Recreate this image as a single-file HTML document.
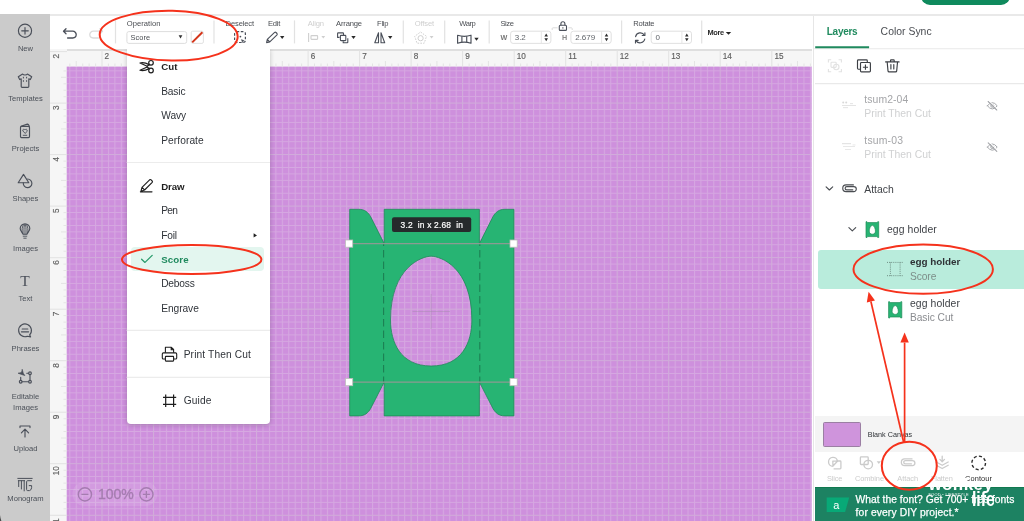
<!DOCTYPE html>
<html><head><meta charset="utf-8"><title>Design Space</title>
<style>
*{box-sizing:border-box;margin:0;padding:0}
html,body{width:1024px;height:521px;overflow:hidden;background:#fff;font-family:"Liberation Sans",sans-serif;color:#3a3d42}
.a{position:absolute;white-space:nowrap;line-height:1}
svg{position:absolute;left:0;top:0;overflow:visible;will-change:transform}
#side{left:0;top:14px;width:50px;height:507px;background:#cbcbcb}
.sl{left:0;width:51px;text-align:center;font-size:7.6px;color:#4b5058}
</style></head><body>
<div class="a" style="left:920.5px;top:-14px;width:89px;height:19.4px;border-radius:9px;background:#0f8a5d"></div>
<div class="a" style="left:0;top:14px;width:1024px;height:1.5px;background:#e9e9e9"></div>
<div id="side" class="a"></div>
<svg width="1024" height="521"><path d="M0 515Q.4 518.5 1.4 521H0Z" fill="#4a4a4a"/></svg>
<div class="a sl" style="top:44.7px">New</div>
<div class="a sl" style="top:94.7px">Templates</div>
<div class="a sl" style="top:144.7px">Projects</div>
<div class="a sl" style="top:194.7px">Shapes</div>
<div class="a sl" style="top:244.7px">Images</div>
<div class="a sl" style="top:294.7px">Text</div>
<div class="a sl" style="top:344.7px">Phrases</div>
<div class="a sl" style="top:392.7px">Editable</div>
<div class="a sl" style="top:404.0px">Images</div>
<div class="a sl" style="top:445.2px">Upload</div>
<div class="a sl" style="top:495.2px">Monogram</div>
<div class="a" style="left:50px;top:15.5px;width:763.5px;height:34px;background:#fff"></div>
<div class="a" style="left:50px;top:49px;width:762px;height:17.6px;background:#f6f6f6;border-top:2px solid #dfdfdf"></div>
<div class="a" style="left:50px;top:49px;width:16.7px;height:472px;background:#f6f6f6"></div>
<svg width="1024" height="521" viewBox="0 0 1024 521">
<defs><pattern id="g" x="101.50" y="102.60" width="6.44" height="6.44" patternUnits="userSpaceOnUse"><path d="M0.5 0V6.44M0 0.5H6.44" stroke="#ececec" stroke-opacity=".26" stroke-width="1" fill="none"/></pattern>
<clipPath id="cv"><rect x="66.7" y="66.6" width="745" height="455"/></clipPath></defs>
<rect x="66.7" y="66.6" width="745" height="455" fill="#ce90dd"/>
<rect x="66.7" y="66.6" width="745" height="455" fill="url(#g)"/>
<path d="M102.0 66.6V521M153.5 66.6V521M205.0 66.6V521M256.6 66.6V521M308.1 66.6V521M359.6 66.6V521M411.1 66.6V521M462.6 66.6V521M514.2 66.6V521M565.7 66.6V521M617.2 66.6V521M668.7 66.6V521M720.2 66.6V521M771.8 66.6V521M67 103.1H812M67 154.6H812M67 206.1H812M67 257.7H812M67 309.2H812M67 360.7H812M67 412.2H812M67 463.7H812M67 515.3H812" stroke="#c9b4cf" stroke-opacity=".35" stroke-width="1" fill="none"/>
<path d="M69.8 63.5V66.6M76.2 61V66.6M82.7 63.5V66.6M89.1 63.5V66.6M95.6 63.5V66.6M108.4 63.5V66.6M114.9 63.5V66.6M121.3 63.5V66.6M127.8 61V66.6M134.2 63.5V66.6M140.6 63.5V66.6M147.1 63.5V66.6M160.0 63.5V66.6M166.4 63.5V66.6M172.8 63.5V66.6M179.3 61V66.6M185.7 63.5V66.6M192.2 63.5V66.6M198.6 63.5V66.6M211.5 63.5V66.6M217.9 63.5V66.6M224.4 63.5V66.6M230.8 61V66.6M237.2 63.5V66.6M243.7 63.5V66.6M250.1 63.5V66.6M263.0 63.5V66.6M269.4 63.5V66.6M275.9 63.5V66.6M282.3 61V66.6M288.8 63.5V66.6M295.2 63.5V66.6M301.6 63.5V66.6M314.5 63.5V66.6M321.0 63.5V66.6M327.4 63.5V66.6M333.8 61V66.6M340.3 63.5V66.6M346.7 63.5V66.6M353.2 63.5V66.6M366.0 63.5V66.6M372.5 63.5V66.6M378.9 63.5V66.6M385.4 61V66.6M391.8 63.5V66.6M398.2 63.5V66.6M404.7 63.5V66.6M417.6 63.5V66.6M424.0 63.5V66.6M430.4 63.5V66.6M436.9 61V66.6M443.3 63.5V66.6M449.8 63.5V66.6M456.2 63.5V66.6M469.1 63.5V66.6M475.5 63.5V66.6M482.0 63.5V66.6M488.4 61V66.6M494.8 63.5V66.6M501.3 63.5V66.6M507.7 63.5V66.6M520.6 63.5V66.6M527.0 63.5V66.6M533.5 63.5V66.6M539.9 61V66.6M546.4 63.5V66.6M552.8 63.5V66.6M559.2 63.5V66.6M572.1 63.5V66.6M578.6 63.5V66.6M585.0 63.5V66.6M591.4 61V66.6M597.9 63.5V66.6M604.3 63.5V66.6M610.8 63.5V66.6M623.6 63.5V66.6M630.1 63.5V66.6M636.5 63.5V66.6M643.0 61V66.6M649.4 63.5V66.6M655.8 63.5V66.6M662.3 63.5V66.6M675.2 63.5V66.6M681.6 63.5V66.6M688.0 63.5V66.6M694.5 61V66.6M700.9 63.5V66.6M707.4 63.5V66.6M713.8 63.5V66.6M726.7 63.5V66.6M733.1 63.5V66.6M739.6 63.5V66.6M746.0 61V66.6M752.4 63.5V66.6M758.9 63.5V66.6M765.3 63.5V66.6M778.2 63.5V66.6M784.6 63.5V66.6M791.1 63.5V66.6M797.5 61V66.6M804.0 63.5V66.6M810.4 63.5V66.6M63.5 70.9H67M61 77.3H67M63.5 83.8H67M63.5 90.2H67M63.5 96.7H67M63.5 109.5H67M63.5 116.0H67M63.5 122.4H67M61 128.9H67M63.5 135.3H67M63.5 141.7H67M63.5 148.2H67M63.5 161.1H67M63.5 167.5H67M63.5 173.9H67M61 180.4H67M63.5 186.8H67M63.5 193.3H67M63.5 199.7H67M63.5 212.6H67M63.5 219.0H67M63.5 225.5H67M61 231.9H67M63.5 238.3H67M63.5 244.8H67M63.5 251.2H67M63.5 264.1H67M63.5 270.5H67M63.5 277.0H67M61 283.4H67M63.5 289.9H67M63.5 296.3H67M63.5 302.7H67M63.5 315.6H67M63.5 322.1H67M63.5 328.5H67M61 334.9H67M63.5 341.4H67M63.5 347.8H67M63.5 354.3H67M63.5 367.1H67M63.5 373.6H67M63.5 380.0H67M61 386.5H67M63.5 392.9H67M63.5 399.3H67M63.5 405.8H67M63.5 418.7H67M63.5 425.1H67M63.5 431.5H67M61 438.0H67M63.5 444.4H67M63.5 450.9H67M63.5 457.3H67M63.5 470.2H67M63.5 476.6H67M63.5 483.1H67M61 489.5H67M63.5 495.9H67M63.5 502.4H67M63.5 508.8H67" stroke="#e4e4e4" stroke-width="1" fill="none"/>
<path d="M102.0 50V66.6M153.5 50V66.6M205.0 50V66.6M256.6 50V66.6M308.1 50V66.6M359.6 50V66.6M411.1 50V66.6M462.6 50V66.6M514.2 50V66.6M565.7 50V66.6M617.2 50V66.6M668.7 50V66.6M720.2 50V66.6M771.8 50V66.6M50 51.6H67M50 103.1H67M50 154.6H67M50 206.1H67M50 257.7H67M50 309.2H67M50 360.7H67M50 412.2H67M50 463.7H67M50 515.3H67" stroke="#e2e2e2" stroke-width="1" fill="none"/>
<path d="M349.7 209.3H358.7C364.7 209.3 368.2 212.3 370.7 216.8L384.2 243.6V209.3H479.4V243.6L492.9 216.8C495.4 212.3 498.9 209.3 504.9 209.3H513.9V415.9H504.9C498.9 415.9 495.4 412.9 492.9 408.4L479.4 382.1V415.9H384.2V382.1L370.7 408.4C368.2 412.9 364.7 415.9 358.7 415.9H349.7ZM431.2 256.2C440.2 256.2 471.85 267 471.85 320C471.85 342 462.2 366 431.2 366C400.2 366 390.55 342 390.55 320C390.55 267 422.2 256.2 431.2 256.2Z" fill="#27b473" fill-rule="evenodd" stroke="#1f8a58" stroke-width=".8"/>
<path d="M431.2 294V329M412.5 311.5H450" stroke="#9a8aa0" stroke-opacity=".45" stroke-width=".8"/>
<path d="M383.59999999999997 243.6V382.1M479.79999999999995 243.6V382.1" stroke="#1d7f53" stroke-width="1.1" stroke-dasharray="7.3 4.2" stroke-dashoffset="5" fill="none"/>
<path d="M349 243.6H513.6M349 382.1H513.6" stroke="#8c9a92" stroke-width="1.1" fill="none"/>
<rect x="345.5" y="240.0" width="7.2" height="7.2" fill="#fff" stroke="#bdbdbd" stroke-width=".8"/>
<rect x="345.5" y="378.5" width="7.2" height="7.2" fill="#fff" stroke="#bdbdbd" stroke-width=".8"/>
<rect x="510.0" y="240.0" width="7.2" height="7.2" fill="#fff" stroke="#bdbdbd" stroke-width=".8"/>
<rect x="510.0" y="378.5" width="7.2" height="7.2" fill="#fff" stroke="#bdbdbd" stroke-width=".8"/>
<rect x="392" y="217.3" width="79.2" height="14.6" rx="2" fill="#262a2c"/>
<text x="400.6" y="227.8" font-family="Liberation Sans, sans-serif" font-size="8.4" fill="#fff" stroke="#fff" stroke-width=".2" xml:space="preserve" textLength="62.3" lengthAdjust="spacing">3.2  in x 2.68  in</text>
<rect x="72.5" y="482" width="85" height="24" rx="12" fill="#fff" fill-opacity=".1"/>
<g stroke="#a57cb0" stroke-width="1.4" fill="none"><circle cx="84.9" cy="494.4" r="6.6"/><circle cx="146.4" cy="494.4" r="6.6"/><path d="M81.4 494.4H88.4M142.9 494.4H149.9M146.4 490.9V497.9"/></g>
<text x="98" y="499.4" font-family="Liberation Sans, sans-serif" font-size="14" fill="#a57cb0" stroke="#a57cb0" stroke-width=".35">100%</text>
<text x="104.6" y="59.4" font-family="Liberation Sans, sans-serif" font-size="8.2" fill="#5e5e5e" stroke="#5e5e5e" stroke-width=".15">2</text>
<text x="156.1" y="59.4" font-family="Liberation Sans, sans-serif" font-size="8.2" fill="#5e5e5e" stroke="#5e5e5e" stroke-width=".15">3</text>
<text x="207.6" y="59.4" font-family="Liberation Sans, sans-serif" font-size="8.2" fill="#5e5e5e" stroke="#5e5e5e" stroke-width=".15">4</text>
<text x="259.2" y="59.4" font-family="Liberation Sans, sans-serif" font-size="8.2" fill="#5e5e5e" stroke="#5e5e5e" stroke-width=".15">5</text>
<text x="310.7" y="59.4" font-family="Liberation Sans, sans-serif" font-size="8.2" fill="#5e5e5e" stroke="#5e5e5e" stroke-width=".15">6</text>
<text x="362.2" y="59.4" font-family="Liberation Sans, sans-serif" font-size="8.2" fill="#5e5e5e" stroke="#5e5e5e" stroke-width=".15">7</text>
<text x="413.7" y="59.4" font-family="Liberation Sans, sans-serif" font-size="8.2" fill="#5e5e5e" stroke="#5e5e5e" stroke-width=".15">8</text>
<text x="465.2" y="59.4" font-family="Liberation Sans, sans-serif" font-size="8.2" fill="#5e5e5e" stroke="#5e5e5e" stroke-width=".15">9</text>
<text x="516.8" y="59.4" font-family="Liberation Sans, sans-serif" font-size="8.2" fill="#5e5e5e" stroke="#5e5e5e" stroke-width=".15">10</text>
<text x="568.3" y="59.4" font-family="Liberation Sans, sans-serif" font-size="8.2" fill="#5e5e5e" stroke="#5e5e5e" stroke-width=".15">11</text>
<text x="619.8" y="59.4" font-family="Liberation Sans, sans-serif" font-size="8.2" fill="#5e5e5e" stroke="#5e5e5e" stroke-width=".15">12</text>
<text x="671.3" y="59.4" font-family="Liberation Sans, sans-serif" font-size="8.2" fill="#5e5e5e" stroke="#5e5e5e" stroke-width=".15">13</text>
<text x="722.8" y="59.4" font-family="Liberation Sans, sans-serif" font-size="8.2" fill="#5e5e5e" stroke="#5e5e5e" stroke-width=".15">14</text>
<text x="774.4" y="59.4" font-family="Liberation Sans, sans-serif" font-size="8.2" fill="#5e5e5e" stroke="#5e5e5e" stroke-width=".15">15</text>
<text transform="translate(58.8 58.6) rotate(-90)" font-family="Liberation Sans, sans-serif" font-size="8.2" fill="#5e5e5e" stroke="#5e5e5e" stroke-width=".15">2</text>
<text transform="translate(58.8 110.1) rotate(-90)" font-family="Liberation Sans, sans-serif" font-size="8.2" fill="#5e5e5e" stroke="#5e5e5e" stroke-width=".15">3</text>
<text transform="translate(58.8 161.6) rotate(-90)" font-family="Liberation Sans, sans-serif" font-size="8.2" fill="#5e5e5e" stroke="#5e5e5e" stroke-width=".15">4</text>
<text transform="translate(58.8 213.1) rotate(-90)" font-family="Liberation Sans, sans-serif" font-size="8.2" fill="#5e5e5e" stroke="#5e5e5e" stroke-width=".15">5</text>
<text transform="translate(58.8 264.7) rotate(-90)" font-family="Liberation Sans, sans-serif" font-size="8.2" fill="#5e5e5e" stroke="#5e5e5e" stroke-width=".15">6</text>
<text transform="translate(58.8 316.2) rotate(-90)" font-family="Liberation Sans, sans-serif" font-size="8.2" fill="#5e5e5e" stroke="#5e5e5e" stroke-width=".15">7</text>
<text transform="translate(58.8 367.7) rotate(-90)" font-family="Liberation Sans, sans-serif" font-size="8.2" fill="#5e5e5e" stroke="#5e5e5e" stroke-width=".15">8</text>
<text transform="translate(58.8 419.2) rotate(-90)" font-family="Liberation Sans, sans-serif" font-size="8.2" fill="#5e5e5e" stroke="#5e5e5e" stroke-width=".15">9</text>
<text transform="translate(58.8 475.3) rotate(-90)" font-family="Liberation Sans, sans-serif" font-size="8.2" fill="#5e5e5e" stroke="#5e5e5e" stroke-width=".15">10</text>
<text transform="translate(58.8 526.9) rotate(-90)" font-family="Liberation Sans, sans-serif" font-size="8.2" fill="#5e5e5e" stroke="#5e5e5e" stroke-width=".15">11</text>
</svg>
<svg width="1024" height="521" viewBox="0 0 1024 521">
<g fill="none" stroke="#4a4f59" stroke-width="1.15" stroke-linecap="round" stroke-linejoin="round">
<circle cx="25" cy="30.8" r="6.6"/><path d="M21.7 30.8H28.3M25 27.5V34.1"/>
<path d="M22.6 74.1C23.6 75.3 26.4 75.3 27.4 74.1L31.7 76.8L30.3 79.6L28.8 78.8V86.4Q28.8 87.3 27.9 87.3H22.1Q21.2 87.3 21.2 86.4V78.8L19.7 79.6L18.3 76.8Z"/>
<path d="M23.4 77.2V78M26.6 77.2V78M23.4 80.6V81.4M26.6 80.6V81.4" stroke-width="1"/>
<rect x="20.5" y="126.4" width="9" height="11.2" rx="1"/><path d="M21 126.2L27.3 124.1Q28 124 28.4 124.6L29.3 126.3"/>
<path d="M25 133.2L22.9 131Q22.3 129.6 23.6 129.3Q24.5 129.2 25 130Q25.5 129.2 26.4 129.3Q27.7 129.6 27.1 131Z" stroke-width=".9"/><path d="M23.2 135.3H26.8" stroke-width=".9"/>
<path d="M23.5 174.4L28.8 182.7H18.2Z"/><path d="M27.6 179A4.3 4.3 0 1 1 23.3 182.9"/>
<path d="M22.9 234.2C22.6 232.2 20.2 231.2 20.2 228.6A4.8 4.8 0 0 1 29.8 228.6C29.8 231.2 27.4 232.2 27.1 234.2Z"/><path d="M23.2 236.2H26.8M23.8 238.2H26.2M24 234V229.5C24 226.5 24.3 225 25 224.3C25.7 225 26 226.5 26 229.5V234M22.3 233C21.8 230 22 226.5 23.5 224.6M27.7 233C28.2 230 28 226.5 26.5 224.6" stroke-width=".9"/>
<path d="M29.6 334.8A6.4 6.4 0 1 0 27.3 336.3L30.6 336.9Z"/><path d="M22.2 329H27.8M21.4 331.8H28.6"/>
<circle cx="30" cy="373.2" r="1.35"/><circle cx="30" cy="381.7" r="1.35"/><circle cx="20.7" cy="381.7" r="1.35"/><path d="M28.6 373.2H26.8M30 374.6V380.3M28.6 381.7H22.1M20.7 380.3V377.4"/>
<path d="M22.3 369.6L23.3 373.3L24.9 375.6L21.4 374.4L18 373.2L21.3 372.6Z" fill="#4a4f59" stroke-width=".6"/>
<path d="M20 427.6V426H30V427.6M25 437V429.4M21.4 432.8L25 429.2L28.6 432.8"/>
<path d="M17.8 478.4H32.2" stroke-width="1"/><path d="M18.3 480.7H24.6M18.7 480.7V486.6M21.4 480.7V489M24.2 480.7V490.9M31.6 480.7H27.6Q26.6 480.7 26.6 481.7V489.6Q26.6 490.6 27.6 490.6H29.5Q31.6 490 31.6 487.6V485.6H29.2" stroke-width="1"/>
</g>
<text x="25" y="286" font-family="Liberation Serif, serif" font-size="15.5" fill="#4a4f59" text-anchor="middle">T</text>
<g stroke="#e2e2e2" stroke-width="1.2">
<path d="M115.5 20.4V43.4"/>
<path d="M214 20.4V43.4"/>
<path d="M294.5 20.4V43.4"/>
<path d="M403.3 20.4V43.4"/>
<path d="M444.7 20.4V43.4"/>
<path d="M489.2 20.4V43.4"/>
<path d="M621.6 20.4V43.4"/>
<path d="M701.7 20.4V43.4"/>
</g>
<g fill="none" stroke-width="1.3" stroke-linecap="round" stroke-linejoin="round"><path d="M66 28.7L63.5 31.2L66 33.7M63.8 31.2H72.8A3.4 3.4 0 0 1 72.8 38H67.6" stroke="#4a4f59"/><path d="M100 28.7L102.5 31.2L100 33.7M102.2 31.2H93.2A3.4 3.4 0 0 0 93.2 38H98.4" stroke="#dadada"/></g>
<text x="126.8" y="26.4" font-family="Liberation Sans, sans-serif" font-size="7.6" fill="#4a4d52" textLength="33.6" lengthAdjust="spacing">Operation</text>
<text x="225.6" y="26.4" font-family="Liberation Sans, sans-serif" font-size="7.6" fill="#4a4d52" textLength="28.5" lengthAdjust="spacing">Deselect</text>
<text x="268" y="26.4" font-family="Liberation Sans, sans-serif" font-size="7.6" fill="#4a4d52" textLength="12.3" lengthAdjust="spacing">Edit</text>
<text x="307.8" y="26.4" font-family="Liberation Sans, sans-serif" font-size="7.6" fill="#cfcfcf" textLength="16.2" lengthAdjust="spacing">Align</text>
<text x="336.1" y="26.4" font-family="Liberation Sans, sans-serif" font-size="7.6" fill="#4a4d52" textLength="26" lengthAdjust="spacing">Arrange</text>
<text x="377.1" y="26.4" font-family="Liberation Sans, sans-serif" font-size="7.6" fill="#4a4d52" textLength="11.3" lengthAdjust="spacing">Flip</text>
<text x="414.8" y="26.4" font-family="Liberation Sans, sans-serif" font-size="7.6" fill="#cfcfcf" textLength="19.3" lengthAdjust="spacing">Offset</text>
<text x="459.2" y="26.4" font-family="Liberation Sans, sans-serif" font-size="7.6" fill="#4a4d52" textLength="16.6" lengthAdjust="spacing">Warp</text>
<text x="500.4" y="26.4" font-family="Liberation Sans, sans-serif" font-size="7.6" fill="#4a4d52" textLength="13.6" lengthAdjust="spacing">Size</text>
<text x="633.3" y="26.4" font-family="Liberation Sans, sans-serif" font-size="7.6" fill="#4a4d52" textLength="21.3" lengthAdjust="spacing">Rotate</text>
<rect x="126.9" y="31.6" width="59.8" height="11.8" rx="2" fill="#fff" stroke="#d9d9d9" stroke-width=".9"/>
<text x="130.6" y="40.2" font-family="Liberation Sans, sans-serif" font-size="7.4" fill="#4a4d52" textLength="19.4" lengthAdjust="spacing">Score</text>
<path d="M178.6 35.2H182.4L180.5 38.4Z" fill="#333"/>
<rect x="191.2" y="31.2" width="12.2" height="12.2" rx="1.5" fill="#fff" stroke="#dcdcdc" stroke-width=".9"/><path d="M192.2 42.4L202.4 32.2" stroke="#d4351a" stroke-width="2"/>
<g fill="none" stroke="#4a4f59"><rect x="234.6" y="31.7" width="10.8" height="10.8" rx="2" stroke-width="1.2" stroke-dasharray="2.6 1.6"/><circle cx="240.4" cy="36.6" r=".9" fill="#4a4f59" stroke="none"/><path d="M241.4 39.6L244.2 40.7L242.9 41.3L242.5 42.6Z" fill="#4a4f59" stroke-width=".5"/></g>
<path d="M266.6 42.6L267.3 39.4L274.6 32.4Q275.3 31.9 276 32.5L277 33.5Q277.5 34.2 277 34.9L269.8 41.9ZM267.3 39.4L269.8 41.9" fill="none" stroke="#4a4f59" stroke-width="1.1" stroke-linejoin="round"/>
<path d="M280.0 36.0H284.4L282.2 39.0Z" fill="#2b2b2b"/>
<g fill="none" stroke="#cfcfcf" stroke-width="1.1"><path d="M308.6 33.1V41.9"/><rect x="311" y="35.6" width="6.6" height="3.8" rx=".6"/></g><path d="M321.4 36.0H325.2L323.3 38.6Z" fill="#cfcfcf"/>
<g fill="none" stroke="#4a4f59" stroke-width="1.1" stroke-linejoin="round"><path d="M340.6 32.9H338.2Q337.6 32.9 337.6 33.5V37.4H339.6M340.6 32.9H342.9Q343.5 32.9 343.5 33.5V35"/><rect x="340.4" y="35.4" width="5.4" height="5.2" rx=".6"/><path d="M347.8 38.2V42.2Q347.8 42.8 347.2 42.8H343.2V41.2"/></g><path d="M351.3 36.0H355.7L353.5 39.0Z" fill="#2b2b2b"/>
<g fill="none" stroke="#4a4f59" stroke-width="1.1" stroke-linejoin="round"><path d="M378.5 32.8V42.8H374.8Z"/><path d="M381 32.8V42.8H384.7Z"/></g><path d="M388.0 36.0H392.4L390.2 39.0Z" fill="#2b2b2b"/>
<g fill="none" stroke="#cfcfcf"><polygon points="420.6,32.0 426.5,36.3 424.2,43.2 417.0,43.2 414.7,36.3" stroke-width="1" stroke-dasharray="1.6 1.2" stroke-linejoin="round"/><circle cx="420.6" cy="38.2" r="2.6" stroke-width="1"/></g><path d="M429.7 36.0H433.5L431.6 38.6Z" fill="#cfcfcf"/>
<g fill="none" stroke="#4a4f59" stroke-width="1.15" stroke-linejoin="round"><path d="M457.6 35.2Q464.3 37.4 471 35.2V43.2Q464.3 41 457.6 43.2Z"/><path d="M461.9 36.3V42.1M466.7 36.3V42.1"/></g><path d="M474.3 37.8H478.7L476.5 40.8Z" fill="#2b2b2b"/>
<rect x="510.6" y="31.2" width="40.3" height="12.2" rx="2.5" fill="#fff" stroke="#dcdcdc" stroke-width=".9"/><path d="M541.3000000000001 31.4V43.2" stroke="#e2e2e2" stroke-width=".9"/><path d="M544.4 36.4H548.0L546.2 33.5ZM544.4 38.3H548.0L546.2 41.2Z" fill="#2e2e2e"/><text x="514.7" y="40.4" font-family="Liberation Sans, sans-serif" font-size="8" fill="#5f6368">3.2</text>
<rect x="570.9" y="31.2" width="40.3" height="12.2" rx="2.5" fill="#fff" stroke="#dcdcdc" stroke-width=".9"/><path d="M601.6 31.4V43.2" stroke="#e2e2e2" stroke-width=".9"/><path d="M604.7 36.4H608.3L606.5 33.5ZM604.7 38.3H608.3L606.5 41.2Z" fill="#2e2e2e"/><text x="575.2" y="40.4" font-family="Liberation Sans, sans-serif" font-size="8" fill="#5f6368">2.679</text>
<rect x="651.2" y="31.2" width="40.3" height="12.2" rx="2.5" fill="#fff" stroke="#dcdcdc" stroke-width=".9"/><path d="M681.9000000000001 31.4V43.2" stroke="#e2e2e2" stroke-width=".9"/><path d="M685.0 36.4H688.6L686.8 33.5ZM685.0 38.3H688.6L686.8 41.2Z" fill="#2e2e2e"/><text x="655.6" y="40.4" font-family="Liberation Sans, sans-serif" font-size="8" fill="#5f6368">0</text>
<text x="500.4" y="40.2" font-family="Liberation Sans, sans-serif" font-size="7.2" fill="#777" font-weight="bold">W</text>
<text x="562" y="40.2" font-family="Liberation Sans, sans-serif" font-size="7.2" fill="#8a8a8a" font-weight="bold">H</text>
<g fill="none" stroke="#4a4f59" stroke-width="1.1"><rect x="559.3" y="25.2" width="7.2" height="5.2" rx="1"/><path d="M560.9 25.2V23.8A2 2 0 0 1 564.9 23.8V25.2"/><path d="M562.9 27.2V28.6" stroke-width="1"/></g>
<path d="M552.2 30V28.6Q552.2 27.8 553 27.8H557.6M568.4 27.8H571.4Q572.2 27.8 572.2 28.6V30" fill="none" stroke="#d6d6d6" stroke-width=".9"/>
<g fill="none" stroke="#4a4f59" stroke-width="1.15" stroke-linecap="round" stroke-linejoin="round"><path d="M635.6 36.6A4.8 4.8 0 0 1 644.4 35.2M644.8 39A4.8 4.8 0 0 1 636 40.6"/><path d="M644.9 32.8V35.5H642.2M635.5 43V40.3H638.2"/></g>
<text x="707.5" y="35.2" font-family="Liberation Sans, sans-serif" font-size="7.4" fill="#2a2a2a" font-weight="bold" textLength="16.6" lengthAdjust="spacing">More</text>
<path d="M725.8 31.9H731.2L728.5 34.8Z" fill="#222"/>
</svg>
<div class="a" style="left:126.7px;top:49px;width:143.3px;height:375.4px;background:#fff;border-radius:0 0 4px 4px;box-shadow:0 1px 5px rgba(0,0,0,.22)"></div>
<div class="a" style="left:120px;top:44px;width:156px;height:5px;background:#fff"></div>
<div class="a" style="left:131px;top:247.4px;width:133px;height:24px;background:#e3f6ef;border-radius:4px"></div>
<svg width="1024" height="521" viewBox="0 0 1024 521">
<path d="M126.7 162.5H270M126.7 330.3H270M126.7 377.4H270" stroke="#ececec" stroke-width="1.2"/>
<text x="161.2" y="70.3" font-family="Liberation Sans, sans-serif" font-size="9.7" fill="#1e1e1e" font-weight="bold" textLength="16.4" lengthAdjust="spacing">Cut</text>
<text x="161.2" y="94.8" font-family="Liberation Sans, sans-serif" font-size="10.2" fill="#30343a" textLength="24.3" lengthAdjust="spacing">Basic</text>
<text x="161.2" y="119.2" font-family="Liberation Sans, sans-serif" font-size="10.2" fill="#30343a" textLength="25" lengthAdjust="spacing">Wavy</text>
<text x="161.2" y="143.6" font-family="Liberation Sans, sans-serif" font-size="10.2" fill="#30343a" textLength="42.5" lengthAdjust="spacing">Perforate</text>
<text x="161.2" y="189.7" font-family="Liberation Sans, sans-serif" font-size="9.7" fill="#1e1e1e" font-weight="bold" textLength="23.4" lengthAdjust="spacing">Draw</text>
<text x="161.2" y="214.3" font-family="Liberation Sans, sans-serif" font-size="10.2" fill="#30343a" textLength="16.8" lengthAdjust="spacing">Pen</text>
<text x="161.2" y="238.7" font-family="Liberation Sans, sans-serif" font-size="10.2" fill="#30343a" textLength="15.8" lengthAdjust="spacing">Foil</text>
<text x="161.2" y="287.2" font-family="Liberation Sans, sans-serif" font-size="10.2" fill="#30343a" textLength="33.6" lengthAdjust="spacing">Deboss</text>
<text x="161.2" y="311.7" font-family="Liberation Sans, sans-serif" font-size="10.2" fill="#30343a" textLength="37.6" lengthAdjust="spacing">Engrave</text>
<text x="161.2" y="263.1" font-family="Liberation Sans, sans-serif" font-size="9.7" fill="#1f8a5e" font-weight="bold" textLength="27.4" lengthAdjust="spacing">Score</text>
<text x="183.7" y="358.1" font-family="Liberation Sans, sans-serif" font-size="10.2" fill="#30343a" textLength="67.2" lengthAdjust="spacing">Print Then Cut</text>
<text x="183.7" y="404.4" font-family="Liberation Sans, sans-serif" font-size="10.2" fill="#30343a" textLength="27.7" lengthAdjust="spacing">Guide</text>
<path d="M253.6 233.3L257 235.4L253.6 237.5Z" fill="#222"/>
<path d="M141.6 259.3L145 262.4L152.2 255.4" fill="none" stroke="#279a6a" stroke-width="1.3" stroke-linecap="round" stroke-linejoin="round"/>
<g fill="none" stroke="#1e1e1e" stroke-width="1.2" stroke-linejoin="round"><circle cx="151" cy="62.8" r="2.3"/><circle cx="151" cy="70.5" r="2.3"/><path d="M149.4 64.5L147.2 66.3L140 63Q143.6 61.6 149.6 64.9ZM149.4 68.8L147.2 67L140 70.3Q143.6 71.7 149.6 68.4Z"/></g>
<g fill="none" stroke="#1e1e1e" stroke-width="1.15" stroke-linejoin="round" stroke-linecap="round"><path d="M141 191.2L142 187.4L149.6 179.8Q150.3 179.2 151 179.8L152.2 181Q152.8 181.7 152.2 182.4L144.6 190ZM142 187.4L144.6 190M140.4 191.8H152"/></g>
<g fill="none" stroke="#1e1e1e" stroke-width="1.1" stroke-linejoin="round"><path d="M165.4 352.8V347.3H171.4L173.6 349.5V352.8M171.2 347.4V349.7H173.5"/><path d="M165.4 359H163.4Q162.3 359 162.3 357.9V354Q162.3 352.9 163.4 352.9H175.6Q176.7 352.9 176.7 354V357.9Q176.7 359 175.6 359H173.6"/><rect x="165.4" y="356.4" width="8.2" height="4.7" rx=".5"/></g>
<path d="M165.7 394.6V407M173.6 394.6V407M163 397.3H176.2M163 404.3H176.2" fill="none" stroke="#1e1e1e" stroke-width="1.2"/>
</svg>
<div class="a" style="left:813px;top:15.5px;width:211px;height:505.5px;background:#fff;border-left:1px solid #e6e6e6"></div>
<div class="a" style="left:815.2px;top:416.4px;width:209px;height:35.6px;background:#f4f4f4"></div>
<div class="a" style="left:818px;top:249.8px;width:206px;height:39.7px;background:#b9ecdc;border-radius:3px 0 0 3px"></div>
<div class="a" style="left:815.2px;top:487.4px;width:209px;height:34px;background:#1d8262;border-top:1px solid #10794f"></div>
<div class="a" style="left:822.8px;top:421.6px;width:37.8px;height:25.2px;background:#cf94dc;border:1px solid #9b7fa3;border-radius:1.5px"></div>
<svg width="1024" height="521" viewBox="0 0 1024 521">
<path d="M814 48.7H1024M815 83.6H1024" stroke="#e9e9e9" stroke-width="1.1"/>
<path d="M815.2 47.2H869.1" stroke="#1f8a5e" stroke-width="2"/>
<text x="826.8" y="35.3" font-family="Liberation Sans, sans-serif" font-size="10" fill="#1f8a5e" font-weight="bold" textLength="30.8" lengthAdjust="spacing">Layers</text>
<text x="880.6" y="35.2" font-family="Liberation Sans, sans-serif" font-size="10.4" fill="#4a4d52" textLength="51" lengthAdjust="spacing">Color Sync</text>
<g fill="none" stroke="#e2e2e2" stroke-width="1.1"><path d="M828.4 62.5V59.7H831.2M838.6 59.7H841.4V62.5M841.4 68.9V71.7H838.6M831.2 71.7H828.4V68.9"/><rect x="831" y="62.2" width="5.2" height="5.2" rx=".8"/><circle cx="836.3" cy="67" r="2.7"/></g>
<g fill="none" stroke="#3c3f44" stroke-width="1.15" stroke-linejoin="round"><path d="M860.3 69.2H858.4Q857.5 69.2 857.5 68.3V60.7Q857.5 59.8 858.4 59.8H866.4Q867.3 59.8 867.3 60.7V62.2"/><rect x="860.5" y="62.5" width="9.9" height="9.4" rx=".9"/><path d="M865.45 64.6V69.8M862.9 67.2H868"/></g>
<g fill="none" stroke="#3c3f44" stroke-width="1.15" stroke-linejoin="round" stroke-linecap="round"><path d="M885.6 61.9H899.1M890.5 61.7V60.4Q890.5 59.8 891.1 59.8H893.6Q894.2 59.8 894.2 60.4V61.7M887.2 62.2L888 70.9Q888.1 71.9 889.1 71.9H895.6Q896.6 71.9 896.7 70.9L897.5 62.2M890.9 64.6V69M893.8 64.6V69"/></g>
<text x="864.3" y="102.8" font-family="Liberation Sans, sans-serif" font-size="10.4" fill="#a4a5a8" textLength="43.9" lengthAdjust="spacing">tsum2-04</text>
<text x="864.3" y="116.6" font-family="Liberation Sans, sans-serif" font-size="10.4" fill="#d0d1d2" textLength="66.5" lengthAdjust="spacing">Print Then Cut</text>
<text x="864.3" y="144.3" font-family="Liberation Sans, sans-serif" font-size="10.4" fill="#a4a5a8" textLength="38.7" lengthAdjust="spacing">tsum-03</text>
<text x="864.3" y="158.3" font-family="Liberation Sans, sans-serif" font-size="10.4" fill="#d0d1d2" textLength="66.5" lengthAdjust="spacing">Print Then Cut</text>
<g fill="#d8d8d8"><circle cx="843.2" cy="102.6" r="1"/><circle cx="846.2" cy="102.6" r="1"/><rect x="842" y="105" width="14" height=".7"/><rect x="843" y="107.4" width="5" height=".7"/><rect x="850" y="103.4" width="3" height=".7"/></g>
<g fill="#dedede"><rect x="842" y="143.2" width="9" height="1"/><rect x="843" y="146.2" width="12" height=".7"/><rect x="845" y="149" width="6" height=".7"/><rect x="852.5" y="144.6" width="3" height=".7"/></g>
<g fill="none" stroke="#a4a6aa" stroke-width="1" stroke-linecap="round"><path d="M987.4 105.8Q992.3 99.39999999999999 997.1999999999999 105.8Q992.3 112.2 987.4 105.8Z"/><circle cx="992.3" cy="105.8" r="1.5"/><path d="M988.1999999999999 101.5L996.8 110.0" stroke-width="1.1"/><path d="M989.0999999999999 100.7L997.6999999999999 109.2" stroke="#fff" stroke-width="1"/></g>
<g fill="none" stroke="#a4a6aa" stroke-width="1" stroke-linecap="round"><path d="M987.4 147.1Q992.3 140.7 997.1999999999999 147.1Q992.3 153.5 987.4 147.1Z"/><circle cx="992.3" cy="147.1" r="1.5"/><path d="M988.1999999999999 142.79999999999998L996.8 151.29999999999998" stroke-width="1.1"/><path d="M989.0999999999999 142.0L997.6999999999999 150.5" stroke="#fff" stroke-width="1"/></g>
<g fill="none" stroke="#4a4d52" stroke-width="1.15" stroke-linecap="round" stroke-linejoin="round"><path d="M826.1 186.8L829.4 190L832.7 186.8M848.9 227.6L852.3 230.8L855.7 227.6"/></g>
<path d="M853.4 184.9H846.1A3.35 3.35 0 0 0 846.1 191.6H853.8A2.50 2.50 0 0 0 853.8 186.6H846.8A1.65 1.65 0 0 0 846.8 189.9H852.8" fill="none" stroke="#4a4d52" stroke-width="1.15" stroke-linecap="round"/>
<text x="864.2" y="192.7" font-family="Liberation Sans, sans-serif" font-size="10.4" fill="#3f4247" textLength="29.7" lengthAdjust="spacing">Attach</text>
<path d="M867.0 221.7L867.9 222.6H876.8000000000001L877.7 221.7H878.7V237.5H877.7L876.8000000000001 236.6H867.9L867.0 237.5H866V221.7ZM872.35 225.3C874.25 225.3 875.45 229.1 875.45 231.1C875.45 233.20000000000002 874.0500000000001 234.20000000000002 872.35 234.20000000000002C870.65 234.20000000000002 869.25 233.20000000000002 869.25 231.1C869.25 229.1 870.45 225.3 872.35 225.3Z" fill="#27b473" fill-rule="evenodd" stroke="#1f8a58" stroke-width=".7"/>
<text x="887" y="233.1" font-family="Liberation Sans, sans-serif" font-size="10.4" fill="#3f4247" textLength="49.8" lengthAdjust="spacing">egg holder</text>
<g fill="none" stroke="#6f8f84" stroke-width="1" stroke-dasharray="1 1.1"><path d="M887 262.4H903.8M887 275.7H903.8M890.4 262.4V275.7M900.1 262.4V275.7"/></g>
<text x="909.9" y="265.1" font-family="Liberation Sans, sans-serif" font-size="9.9" fill="#2e3236" font-weight="bold" textLength="50.4" lengthAdjust="spacing">egg holder</text>
<text x="909.9" y="279.9" font-family="Liberation Sans, sans-serif" font-size="10.2" fill="#7d8e89" textLength="26.5" lengthAdjust="spacing">Score</text>
<path d="M889.6 301.7L890.5 302.59999999999997H899.9000000000001L900.8000000000001 301.7H901.8000000000001V317.9H900.8000000000001L899.9000000000001 317.0H890.5L889.6 317.9H888.6V301.7ZM895.2 305.5C897.1 305.5 898.3000000000001 309.3 898.3000000000001 311.3C898.3000000000001 313.40000000000003 896.9000000000001 314.40000000000003 895.2 314.40000000000003C893.5 314.40000000000003 892.1 313.40000000000003 892.1 311.3C892.1 309.3 893.3000000000001 305.5 895.2 305.5Z" fill="#27b473" fill-rule="evenodd" stroke="#1f8a58" stroke-width=".7"/>
<text x="909.9" y="306.6" font-family="Liberation Sans, sans-serif" font-size="10.4" fill="#3f4247" textLength="50" lengthAdjust="spacing">egg holder</text>
<text x="909.9" y="320.7" font-family="Liberation Sans, sans-serif" font-size="10.2" fill="#8a8c90" textLength="43.5" lengthAdjust="spacing">Basic Cut</text>
<text x="867.7" y="437.1" font-family="Liberation Sans, sans-serif" font-size="7.2" fill="#2e3236" textLength="44.4" lengthAdjust="spacing">Blank Canvas</text>
<g fill="none" stroke="#cbcbcb" stroke-width="1.3" stroke-linejoin="round"><path d="M832.9 466.3A4.5 4.5 0 1 1 837.5 461.2"/><path d="M836.5 461H840.1Q840.9 461 840.9 461.8V468.1Q840.9 468.9 840.1 468.9H833.6"/><path d="M832.8 461.2H837.4L833 466Z"/></g>
<g fill="none" stroke="#cbcbcb" stroke-width="1.3"><rect x="860.4" y="456.9" width="7.8" height="7.6" rx=".8"/><circle cx="868.2" cy="464.6" r="4.3"/></g><path d="M876.7 461.3H880.9L878.8 464.1Z" fill="#cbcbcb"/>
<path d="M912.0 458.9H904.7A3.35 3.35 0 0 0 904.7 465.6H912.4A2.50 2.50 0 0 0 912.4 460.6H905.4A1.65 1.65 0 0 0 905.4 463.9H911.4" fill="none" stroke="#cbcbcb" stroke-width="1.3" stroke-linecap="round"/>
<g fill="none" stroke="#cbcbcb" stroke-width="1.3" stroke-linecap="round" stroke-linejoin="round"><path d="M942.2 456.2V461.4M939.9 459.4L942.2 461.7L944.5 459.4M936.2 462L942.2 465.3L948.2 462M936.2 465.2L942.2 468.5L948.2 465.2"/></g>
<circle cx="978.7" cy="462.9" r="6.8" fill="none" stroke="#2b2b2b" stroke-width="1.4" stroke-dasharray="3.1 2.24"/>
<text x="826.9" y="480.7" font-family="Liberation Sans, sans-serif" font-size="7.4" fill="#cbcbcb" textLength="15.4" lengthAdjust="spacing">Slice</text>
<text x="855" y="480.7" font-family="Liberation Sans, sans-serif" font-size="7.4" fill="#cbcbcb" textLength="29" lengthAdjust="spacing">Combine</text>
<text x="897.3" y="480.7" font-family="Liberation Sans, sans-serif" font-size="7.4" fill="#cbcbcb" textLength="20.8" lengthAdjust="spacing">Attach</text>
<text x="931" y="480.7" font-family="Liberation Sans, sans-serif" font-size="7.4" fill="#cbcbcb" textLength="21.8" lengthAdjust="spacing">Flatten</text>
<text x="965" y="480.7" font-family="Liberation Sans, sans-serif" font-size="7.4" fill="#2b2b2b" textLength="27" lengthAdjust="spacing">Contour</text>
<path d="M826.7 497.5H849.2L845.1 512.1H826.7Z" fill="#08a977"/>
<text x="836.4" y="508.6" font-family="Liberation Sans, sans-serif" font-size="11" fill="#fff" text-anchor="middle">a</text>
<text x="855.6" y="502.8" font-family="Liberation Sans, sans-serif" font-size="10.3" fill="#fff" textLength="158.7" lengthAdjust="spacing" stroke="#fff" stroke-width=".25">What the font? Get 700+ free fonts</text>
<text x="855.6" y="516.3" font-family="Liberation Sans, sans-serif" font-size="10.3" fill="#fff" textLength="103" lengthAdjust="spacing" stroke="#fff" stroke-width=".25">for every DIY project.*</text>
<text x="928.4" y="490.3" font-family="Liberation Sans, sans-serif" font-size="17" fill="#fff" font-weight="bold" textLength="64.5" lengthAdjust="spacing">wonkey</text>
<text x="971.9" y="505.7" font-family="Liberation Sans, sans-serif" font-size="19.8" fill="#fff" font-weight="bold" textLength="22.8" lengthAdjust="spacingAndGlyphs">life</text>
<text x="928.5" y="495.6" font-family="Liberation Sans, sans-serif" font-size="3.9" fill="#fff" textLength="40" lengthAdjust="spacing">FOOD • LIFESTYLE</text>
<g fill="none" stroke="#f5321c" stroke-width="2"><path d="M172 10.7A65.7 24.9 0 0 1 172 60.5A72.3 24.9 0 0 1 172 10.7Z" transform="rotate(1 168.7 35.5)"/><ellipse cx="191.7" cy="259.5" rx="69.7" ry="14.5"/><ellipse cx="923.2" cy="269.2" rx="69.7" ry="24.6"/><ellipse cx="909.3" cy="465.8" rx="27.5" ry="24"/></g>
<path d="M903.6 442.0L870.9 301.5" stroke="#f5321c" stroke-width="1.7" fill="none"/><path d="M868.6 291.8L875.0 300.6L866.8 302.5Z" fill="#f5321c"/>
<path d="M904.6 442.0L904.6 342.6" stroke="#f5321c" stroke-width="1.7" fill="none"/><path d="M904.6 332.6L908.8 342.6L900.4 342.6Z" fill="#f5321c"/>
</svg>
</body></html>
